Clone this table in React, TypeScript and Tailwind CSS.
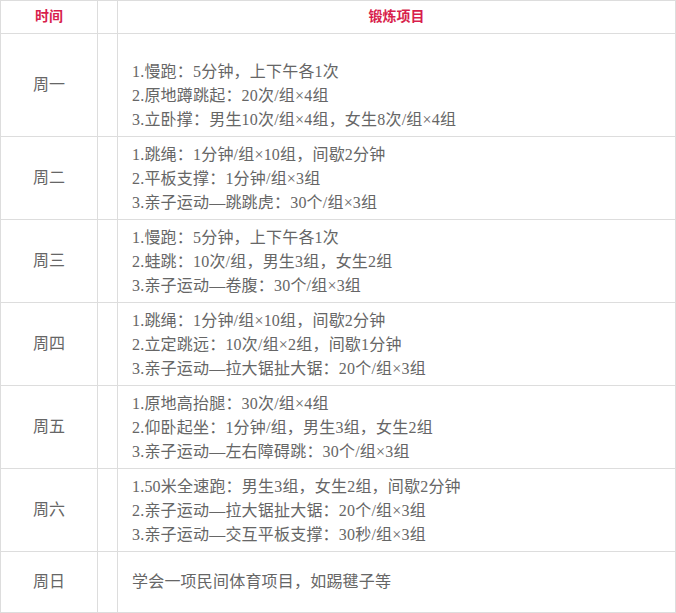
const rows = [
  {
    day: '周一',
    items: ['1.慢跑：5分钟，上下午各1次', '2.原地蹲跳起：20次/组×4组', '3.立卧撑：男生10次/组×4组，女生8次/组×4组'],
    h: 'h-[103px]',
    pad: 'pt-[26px]',
  },
  {
    day: '周二',
    items: ['1.跳绳：1分钟/组×10组，间歇2分钟', '2.平板支撑：1分钟/组×3组', '3.亲子运动—跳跳虎：30个/组×3组'],
    h: 'h-[83px]',
    pad: 'pt-[6px]',
  },
  {
    day: '周三',
    items: ['1.慢跑：5分钟，上下午各1次', '2.蛙跳：10次/组，男生3组，女生2组', '3.亲子运动—卷腹：30个/组×3组'],
    h: 'h-[83px]',
    pad: 'pt-[6px]',
  },
  {
    day: '周四',
    items: ['1.跳绳：1分钟/组×10组，间歇2分钟', '2.立定跳远：10次/组×2组，间歇1分钟', '3.亲子运动—拉大锯扯大锯：20个/组×3组'],
    h: 'h-[83px]',
    pad: 'pt-[6px]',
  },
  {
    day: '周五',
    items: ['1.原地高抬腿：30次/组×4组', '2.仰卧起坐：1分钟/组，男生3组，女生2组', '3.亲子运动—左右障碍跳：30个/组×3组'],
    h: 'h-[83px]',
    pad: 'pt-[6px]',
  },
  {
    day: '周六',
    items: ['1.50米全速跑：男生3组，女生2组，间歇2分钟', '2.亲子运动—拉大锯扯大锯：20个/组×3组', '3.亲子运动—交互平板支撑：30秒/组×3组'],
    h: 'h-[83px]',
    pad: 'pt-[6px]',
  },
]

export default function App() {
  return (
    <div
      className="w-[676px] bg-white text-[16px] leading-[24px] text-[#666666]"
      style={{ fontFamily: '"Liberation Serif", "Noto Sans CJK SC", serif' }}
    >
      <div className="border border-[#dddddd]">
        {/* header */}
        <div className="flex h-[33px] border-b border-[#dddddd] text-[14px] font-bold text-[#d81e4c]">
          <div className="flex w-[97px] items-center justify-center border-r border-[#dddddd]">时间</div>
          <div className="w-[20px] border-r border-[#dddddd]" />
          <div className="flex flex-1 items-center justify-center">锻炼项目</div>
        </div>

        {rows.map((r) => (
          <div key={r.day} className={`flex border-b border-[#dddddd] ${r.h}`}>
            <div className="flex w-[97px] items-center justify-center border-r border-[#dddddd]">{r.day}</div>
            <div className="w-[20px] border-r border-[#dddddd]" />
            <div className={`flex-1 pl-[14px] tracking-[0.2px] ${r.pad}`}>
              {r.items.map((it) => (
                <div key={it} className="whitespace-nowrap">{it}</div>
              ))}
            </div>
          </div>
        ))}

        <div className="flex h-[60px]">
          <div className="flex w-[97px] items-center justify-center border-r border-[#dddddd]">周日</div>
          <div className="w-[20px] border-r border-[#dddddd]" />
          <div className="flex flex-1 items-center pl-[14px] tracking-[0.2px]">学会一项民间体育项目，如踢毽子等</div>
        </div>
      </div>
    </div>
  )
}
